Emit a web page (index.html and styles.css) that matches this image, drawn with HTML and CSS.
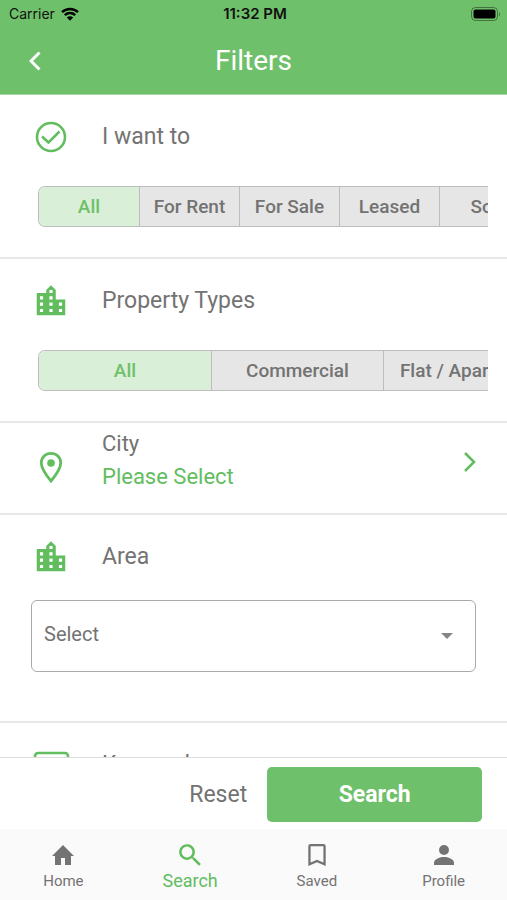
FILE: index.html
```html
<!DOCTYPE html>
<html lang="en">
<head>
    <meta charset="UTF-8">
    <meta name="viewport" content="width=device-width, initial-scale=1.0">
    <title>Filters</title>
    <link rel="stylesheet" href="styles.css">
</head>
<body>
    <svg class="sprite" aria-hidden="true">
        <symbol id="icon-city" viewBox="0 0 24 24">
            <path d="M15 11V5l-3-3-3 3v2H3v14h18V11h-6zm-8 8H5v-2h2v2zm0-4H5v-2h2v2zm0-4H5V9h2v2zm6 8h-2v-2h2v2zm0-4h-2v-2h2v2zm0-4h-2V9h2v2zm0-4h-2V5h2v2zm6 12h-2v-2h2v2zm0-4h-2v-2h2v2z"/>
        </symbol>
    </svg>

    <header>
        <div class="status-bar">
            <div class="carrier">
                <span>Carrier</span>
                <svg class="wifi" viewBox="0 0 18 14">
                    <path d="M1 5.2a11.5 11.5 0 0 1 16 0M3.8 8.2a7.4 7.4 0 0 1 10.4 0" fill="none" stroke="#000" stroke-width="2.4"/>
                    <path d="M5.8 10.5a4.6 4.6 0 0 1 6.4 0L9 13.8z"/>
                </svg>
            </div>
            <span class="time">11:32 PM</span>
            <svg class="battery" viewBox="0 0 30 14">
                <rect x=".5" y=".5" width="26" height="13" rx="4" fill="none" stroke="#000" stroke-opacity=".4"/>
                <rect x="2.5" y="2.5" width="22" height="9" rx="2"/>
                <path d="M28 5v4.500q2-2.250 0-4.500z" fill-opacity=".4"/>
            </svg>
        </div>
        <div class="title-bar">
            <button class="back" aria-label="Back">
                <svg viewBox="0 0 12 20"><path d="M10.500 1.500L2 10l8.500 8.500" fill="none" stroke="#fff" stroke-width="3"/></svg>
            </button>
            <h1>Filters</h1>
        </div>
    </header>

    <main>
        <section>
            <div class="row">
                <svg class="icon" viewBox="0 0 40 40">
                    <circle cx="20" cy="20" r="14" fill="none" stroke="#62bd5f" stroke-width="2.600"/>
                    <path d="M11 19.500l6.500 6L28.500 14.500" fill="none" stroke="#62bd5f" stroke-width="2.600"/>
                </svg>
                <h2>I want to</h2>
            </div>
            <div class="segments">
                <button class="active">All</button>
                <button>For Rent</button>
                <button>For Sale</button>
                <button>Leased</button>
                <button>Sold</button>
            </div>
        </section>

        <section>
            <div class="row">
                <div class="icon"><svg class="building"><use href="#icon-city"/></svg></div>
                <h2>Property Types</h2>
            </div>
            <div class="segments wide">
                <button class="active">All</button>
                <button>Commercial</button>
                <button>Flat / Apartment</button>
            </div>
        </section>

        <section class="city">
            <button class="city-button">
                <svg class="icon" viewBox="0 0 40 40">
                    <path d="M20 6.300c-5.500 0-9.700 4.200-9.700 9.700C10.300 22.500 20 34 20 34s9.700-11.500 9.700-18c0-5.500-4.200-9.700-9.700-9.700z" fill="none" stroke="#62bd5f" stroke-width="2.800"/>
                    <circle cx="20" cy="16" r="3.800" fill="#62bd5f"/>
                </svg>
                <span class="city-text">
                    <span>City</span>
                    <span class="value">Please Select</span>
                </span>
                <svg class="chevron" viewBox="0 0 12 20"><path d="M1 1l9 9-9 9" fill="none" stroke="#62bd5f" stroke-width="2.500"/></svg>
            </button>
        </section>

        <section>
            <div class="row">
                <div class="icon"><svg class="building"><use href="#icon-city"/></svg></div>
                <h2><label for="area">Area</label></h2>
            </div>
            <div class="select-box">
                <select id="area">
                    <option>Select</option>
                </select>
                <svg class="arrow" viewBox="0 0 12 6"><path d="M0 0h12L6 6z"/></svg>
            </div>
        </section>

        <section>
            <div class="row">
                <svg class="icon" viewBox="0 0 40 40">
                    <rect x="4" y="8" width="33" height="24" rx="3" fill="none" stroke="#62bd5f" stroke-width="2.600"/>
                    <path d="M9 14h3m3 0h3m3 0h3m3 0h3M9 20h3m3 0h3m3 0h3m3 0h3M13 26h15" stroke="#62bd5f" stroke-width="2.600"/>
                </svg>
                <h2>Keywords</h2>
            </div>
        </section>
    </main>

    <div class="actions">
        <button class="reset">Reset</button>
        <button class="search">Search</button>
    </div>

    <nav>
        <a href="#home">
            <svg viewBox="0 0 24 24"><path d="M10 22v-7h4v7h6v-9h3L12 2 1 13h3v9z"/></svg>
            <span>Home</span>
        </a>
        <a href="#search" class="active">
            <svg viewBox="0 0 24 24"><path d="M16.300 14.400h-.9l-.3-.3a7.900 7.900 0 1 0-1 1l.3.3v.9l6.600 6.500 1.900-1.900zM9 14.400a5.400 5.400 0 1 1 0-10.800 5.400 5.400 0 0 1 0 10.800z"/></svg>
            <span>Search</span>
        </a>
        <a href="#saved">
            <svg viewBox="0 0 24 24"><path d="M18.500 1h-13A2.200 2.200 0 0 0 3.300 3.200V23l8.700-3.800 8.700 3.800V3.200A2.200 2.200 0 0 0 18.500 1zm-.1 18.500L12 16.700l-6.400 2.800V3.300h12.800z"/></svg>
            <span>Saved</span>
        </a>
        <a href="#profile">
            <svg viewBox="0 0 24 24"><circle cx="12" cy="7" r="5"/><path d="M2 22v-2.500C2 16 8.500 14 12 14s10 2 10 5.500V22z"/></svg>
            <span>Profile</span>
        </a>
    </nav>
</body>
</html>
```
FILE: styles.css
```css
* {
    margin: 0;
    padding: 0;
    box-sizing: border-box;
}

body {
    display: flex;
    flex-direction: column;
    height: 100vh;
    font-family: Roboto, sans-serif;
    background: #fff;
    color: #737373;
}

button, select {
    font-family: inherit;
    color: inherit;
    background: none;
    border: none;
    cursor: pointer;
}

svg {
    display: block;
}

.sprite {
    position: absolute;
    width: 0;
    height: 0;
}

header {
    background: #6fc06a;
    border-bottom: 1px solid #a9d3a7;
}

.status-bar {
    display: grid;
    grid-template-columns: 1fr auto 1fr;
    align-items: center;
    height: 27px;
    padding: 0 6px 0 9px;
    font-family: Inter, sans-serif;
    font-size: 14px;
    color: #111;
}

.carrier {
    display: flex;
    align-items: center;
    gap: 6px;
}

.wifi {
    width: 18px;
    height: 14px;
}

.time {
    font-size: 15px;
    font-weight: 600;
}

.battery {
    width: 30px;
    height: 14px;
    justify-self: end;
}

.title-bar {
    display: grid;
    grid-template-columns: 1fr auto 1fr;
    align-items: center;
    height: 67px;
    padding: 0 29px;
}

.back {
    width: 12px;
}

h1 {
    font-size: 28px;
    font-weight: 400;
    color: #fff;
}

main {
    flex: 1;
    min-height: 0;
    overflow-y: auto;
    scrollbar-width: none;
}

section {
    padding: 22px 31px 30px;
    border-bottom: 2px solid #e8e8e8;
}

.row {
    display: flex;
    align-items: center;
    gap: 31px;
    height: 40px;
}

.icon {
    display: grid;
    place-items: center;
    flex: none;
    width: 40px;
    height: 40px;
}

.building {
    width: 38px;
    height: 38px;
    fill: #62bd5f;
}

h2 {
    font-size: 23px;
    font-weight: 400;
    line-height: 36px;
}

.segments {
    display: flex;
    height: 41px;
    margin: 29px -12px 0 7px;
    border: 1px solid #bdbdbd;
    border-right: none;
    border-radius: 7px 0 0 7px;
    overflow: hidden;
}

.segments button {
    flex: none;
    width: 100px;
    background: #e6e6e6;
    font-size: 19px;
    font-weight: 500;
    white-space: nowrap;
}

.segments button + button {
    border-left: 1px solid #bdbdbd;
}

.segments.wide button {
    width: 172px;
}

.segments button.active {
    background: #d9efd7;
    color: #6fc06a;
}

section.city {
    padding: 0;
}

.city-button {
    display: flex;
    align-items: center;
    gap: 31px;
    width: 100%;
    padding: 4px 31px 20px;
    text-align: left;
    font-size: 22px;
}

.city-button .icon {
    margin-top: 14px;
}

.city-text {
    display: flex;
    flex: 1;
    flex-direction: column;
    line-height: 33px;
}

.value {
    color: #62bd5f;
}

.chevron {
    width: 12px;
    height: 20px;
    margin-top: 3px;
}

.select-box {
    position: relative;
    margin: 23px 0 19px;
}

.select-box select {
    appearance: none;
    width: 100%;
    height: 72px;
    padding: 0 12px 4px;
    border: 1px solid #aaa;
    border-radius: 6px;
    font-size: 20px;
}

.arrow {
    position: absolute;
    right: 23px;
    top: 33px;
    width: 12px;
    height: 6px;
    fill: #858585;
    pointer-events: none;
}

.actions {
    display: flex;
    justify-content: flex-end;
    gap: 20px;
    padding: 9px 25px 7px;
    border-top: 1px solid #ddd;
}

.reset {
    font-size: 23px;
}

.search {
    width: 47%;
    height: 55px;
    background: #6fc06a;
    border-radius: 5px;
    color: #fff;
    font-size: 23px;
    font-weight: 700;
}

nav {
    display: flex;
    height: 71px;
    padding-top: 14px;
    background: #fafafa;
}

nav a {
    display: flex;
    flex: 1;
    flex-direction: column;
    align-items: center;
    gap: 2px;
    color: #737373;
    font-size: 15px;
    line-height: 24px;
    text-decoration: none;
}

nav svg {
    width: 24px;
    height: 24px;
    fill: currentColor;
}

nav a.active {
    color: #62bd5f;
    font-size: 18px;
}
```
